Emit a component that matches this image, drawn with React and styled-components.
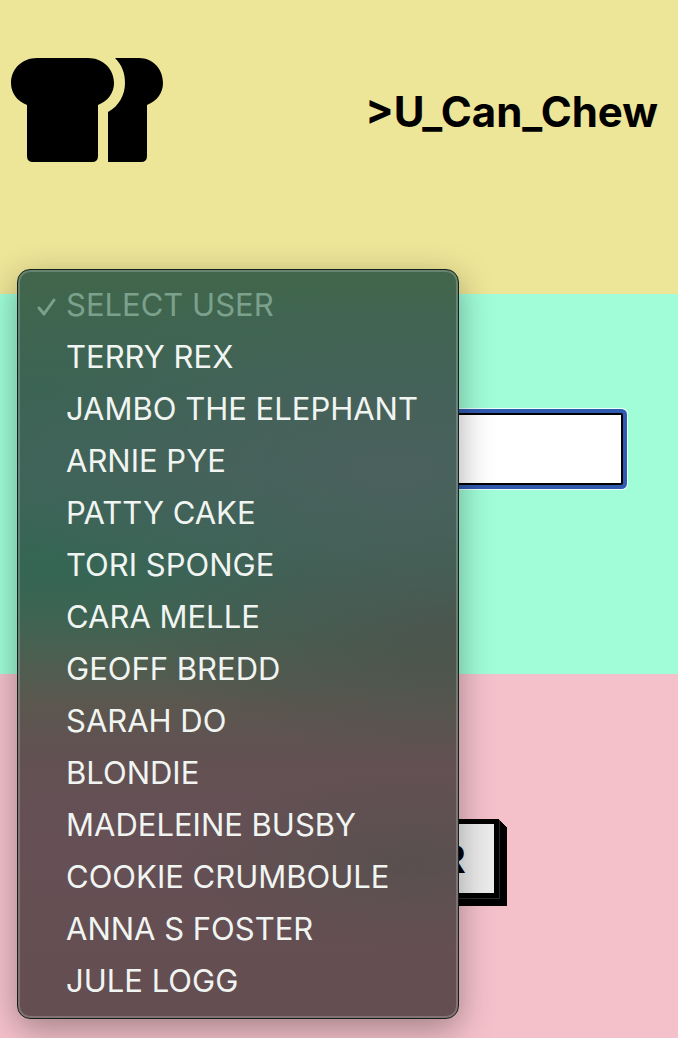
import React, { useState } from "react";
import styled, { createGlobalStyle } from "styled-components";

const GlobalStyle = createGlobalStyle`
  *, *::before, *::after { box-sizing: border-box; }
  body {
    margin: 0;
    font-family: Inter, "Liberation Sans", sans-serif;
    color: #000;
  }
`;

const Page = styled.div`
  display: flex;
  flex-direction: column;
  min-height: 100vh;
`;

const Header = styled.header`
  display: flex;
  align-items: center;
  justify-content: space-between;
  padding: 58px 20px 132px 11px;
  background: #ede597;
`;

const Logo = styled.svg`
  display: block;
  width: 153px;
  height: 104px;
`;

const Title = styled.h1`
  margin: 0;
  padding-top: 4px;
  font-size: 42px;
  line-height: 48px;
  font-weight: 700;
`;

const UserSection = styled.section`
  position: relative;
  z-index: 1;
  display: flex;
  flex-direction: column;
  padding: 119px 55px 189px;
  background: #a0fdd8;
`;

const UserSelect = styled.select`
  appearance: none;
  width: 100%;
  height: 72px;
  padding: 0 16px;
  border: 2px solid #000;
  border-radius: 2px;
  background: #fff;
  color: transparent;
  font: inherit;
  font-size: 31px;
  outline: none;
  box-shadow: 0 0 0 4px #3059b0, 0 0 0 5px #e8fffa;
`;

const Menu = styled.div`
  position: absolute;
  top: -25px;
  left: 17px;
  width: 442px;
  padding: 9px 0 11px;
  border: 1px solid #14201b;
  border-radius: 13px;
  background:
    radial-gradient(ellipse 240px 90px at 90% 79%, rgba(84, 80, 76, 0.7), rgba(84, 80, 76, 0) 100%),
    radial-gradient(ellipse 380px 190px at 85% 27%, rgba(76, 96, 93, 0.9), rgba(76, 96, 93, 0) 100%),
    radial-gradient(ellipse 330px 130px at 100% 48%, rgba(76, 82, 76, 0.9), rgba(76, 82, 76, 0) 100%),
    linear-gradient(#42664a 0%, #3f6550 7%, #3c6455 16%, #3f6459 27%, #356654 40%, #3d6453 46%, #4a6050 51%, #5b574f 58%, #625153 65%, #655055 74%, #644e52 100%);
  box-shadow:
    inset 0 0 0 2px rgba(255, 255, 255, 0.2),
    0 10px 34px rgba(0, 0, 0, 0.34);
`;

const MenuItem = styled.button`
  display: flex;
  align-items: center;
  width: 100%;
  height: 52px;
  padding: 0 16px 0 18px;
  border: 0;
  background: none;
  color: ${({ $muted }) => ($muted ? "#7ba18d" : "#f1f5f2")};
  font: inherit;
  font-size: 31px;
  line-height: 52px;
  text-align: left;
  white-space: nowrap;
`;

const CheckSlot = styled.span`
  display: flex;
  flex: none;
  width: 30px;
  padding-top: 4px;
`;

const ActionSection = styled.section`
  display: flex;
  flex: 1;
  align-items: flex-start;
  justify-content: center;
  padding: 145px 24px 60px;
  background: #f4c1cb;
`;

const ActionButton = styled.button`
  width: 320px;
  height: 79px;
  padding: 0 28px 0 0;
  border: 5px solid #000;
  background: #ebebeb;
  color: #000;
  font-family: "Liberation Sans Narrow", "Liberation Sans", sans-serif;
  font-size: 40px;
  font-weight: 700;
  line-height: 48px;
  text-align: right;
  box-shadow:
    1px 1px 0 #2b2b2b, 2px 2px 0 #000, 3px 3px 0 #000, 4px 4px 0 #000,
    5px 5px 0 #000, 6px 6px 0 #000, 7px 7px 0 #000, 8px 8px 0 #000;
`;

const users = [
  "TERRY REX",
  "JAMBO THE ELEPHANT",
  "ARNIE PYE",
  "PATTY CAKE",
  "TORI SPONGE",
  "CARA MELLE",
  "GEOFF BREDD",
  "SARAH DO",
  "BLONDIE",
  "MADELEINE BUSBY",
  "COOKIE CRUMBOULE",
  "ANNA S FOSTER",
  "JULE LOGG",
];

const placeholder = "SELECT USER";

function BreadLogo() {
  return (
    <Logo viewBox="0 0 153 104" role="img" aria-label="Sliced bread">
      <path d="M26 0H77C92 0 103 11 103 25C103 35 97 43 87 47V98Q87 104 81 104H22Q16 104 16 98V47C6 43 0 35 0 25C0 11 11 0 26 0Z" />
      <path d="M104 0H128C142 0 152 11 152 25C152 35 146 43 136 47V98Q136 104 130 104H97V54C108 48 114 37 114 25C114 15 111 7 104 0Z" />
    </Logo>
  );
}

function CheckMark() {
  return (
    <svg width="22" height="22" viewBox="0 0 22 22" fill="none" stroke="currentColor" strokeWidth="3" strokeLinecap="round" strokeLinejoin="round" aria-hidden="true">
      <path d="M3 12L8 18L18 4" />
    </svg>
  );
}

export default function App() {
  const [selected, setSelected] = useState(placeholder);

  return (
    <>
      <GlobalStyle />
      <Page>
        <Header>
          <BreadLogo />
          <Title>&gt;U_Can_Chew</Title>
        </Header>
        <UserSection>
          <UserSelect
            aria-label="User"
            value={selected}
            onChange={(event) => setSelected(event.target.value)}
          >
            {[placeholder, ...users].map((name) => (
              <option key={name}>{name}</option>
            ))}
          </UserSelect>
          <Menu role="listbox" aria-label="Users">
            {[placeholder, ...users].map((name) => (
              <MenuItem
                key={name}
                type="button"
                role="option"
                aria-selected={name === selected}
                $muted={name === placeholder}
                disabled={name === placeholder}
                onClick={() => setSelected(name)}
              >
                <CheckSlot>{name === selected && <CheckMark />}</CheckSlot>
                {name}
              </MenuItem>
            ))}
          </Menu>
        </UserSection>
        <ActionSection>
          <ActionButton type="button">R</ActionButton>
        </ActionSection>
      </Page>
    </>
  );
}
